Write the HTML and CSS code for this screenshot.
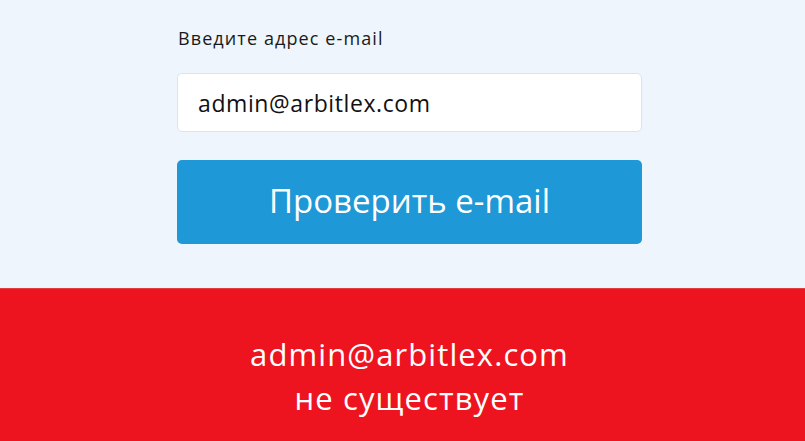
FILE: index.html
```html
<!DOCTYPE html>
<html lang="ru">
<head>
<meta charset="utf-8">
<title>Проверка e-mail</title>
<link rel="stylesheet" href="styles.css">
</head>
<body>
  <section class="check">
    <form class="check-form">
      <label class="check-label" for="email">Введите адрес e-mail</label>
      <input class="check-input" id="email" type="text" value="admin@arbitlex.com">
      <button class="check-button" type="button">Проверить e-mail</button>
    </form>
  </section>
  <section class="result">
    <p class="result-text">admin@arbitlex.com<br>не существует</p>
  </section>
</body>
</html>
```

FILE: styles.css
```css
html, body {
  margin: 0;
  padding: 0;
}

body {
  background: #eef5fc;
  font-family: "Open Sans", "Liberation Sans", sans-serif;
  overflow: hidden;
}

.check {
  height: 288px;
  box-sizing: border-box;
  padding: 25px 0 0 177px;
}

.check-form {
  width: 465px;
  display: flex;
  flex-direction: column;
}

.check-label {
  font-size: 18px;
  line-height: 26px;
  letter-spacing: 1.1px;
  color: #1a1a1a;
  padding-left: 1px;
}

.check-input {
  margin-top: 22px;
  height: 59px;
  box-sizing: border-box;
  border: 1px solid #dde3ea;
  border-radius: 5px;
  background: #fff;
  padding: 0 0 0 20px;
  font-family: inherit;
  font-size: 23px;
  letter-spacing: 0.6px;
  color: #111;
  outline: none;
}

.check-button {
  margin-top: 28px;
  height: 84px;
  border: none;
  border-radius: 5px;
  background: #1e98d6;
  color: #fff;
  font-family: inherit;
  font-size: 33px;
  padding: 0 0 4px;
  cursor: pointer;
}

.result {
  height: 153px;
  background: #ee141f;
  display: flex;
  align-items: center;
  justify-content: center;
  border-top: 1px solid #e23a3f;
  box-sizing: border-box;
}

.result-text {
  margin: 22px 0 0 14px;
  color: #fff;
  font-size: 31px;
  line-height: 44px;
  letter-spacing: 1.1px;
  text-align: center;
}
```
